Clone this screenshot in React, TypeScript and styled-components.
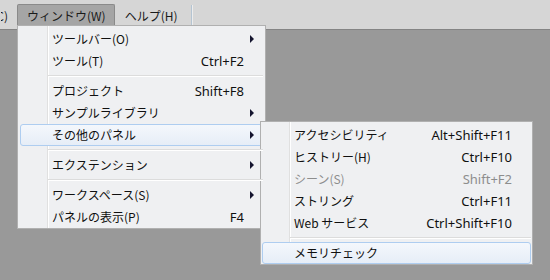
import React from "react";
import styled, { createGlobalStyle, css } from "styled-components";

const GlobalStyle = createGlobalStyle`
  html, body {
    margin: 0;
    padding: 0;
    background: #999999;
  }
  body {
    font-family: "Noto Sans CJK JP", "Noto Sans", sans-serif;
    font-size: 12px;
    color: #111;
  }
`;

type Item =
  | { kind: "sep" }
  | {
      kind?: "item";
      label: string;
      shortcut?: string;
      sub?: boolean;
      disabled?: boolean;
      active?: boolean;
    };

const windowMenu: Item[] = [
  { label: "ツールバー(O)", sub: true },
  { label: "ツール(T)", shortcut: "Ctrl+F2" },
  { kind: "sep" },
  { label: "プロジェクト", shortcut: "Shift+F8" },
  { label: "サンプルライブラリ", sub: true },
  { label: "その他のパネル", sub: true, active: true },
  { kind: "sep" },
  { label: "エクステンション", sub: true },
  { kind: "sep" },
  { label: "ワークスペース(S)", sub: true },
  { label: "パネルの表示(P)", shortcut: "F4" },
];

const panelMenu: Item[] = [
  { label: "アクセシビリティ", shortcut: "Alt+Shift+F11" },
  { label: "ヒストリー(H)", shortcut: "Ctrl+F10" },
  { label: "シーン(S)", shortcut: "Shift+F2", disabled: true },
  { label: "ストリング", shortcut: "Ctrl+F11" },
  { label: "Web サービス", shortcut: "Ctrl+Shift+F10" },
  { kind: "sep" },
  { label: "メモリチェック", active: true },
];

function Menu({ items, width, sub }: { items: Item[]; width: number; sub?: boolean }) {
  return (
    <Dropdown $width={width} $sub={sub}>
      {items.map((item, i) => {
        if (item.kind === "sep") return <Separator key={i} />;
        return (
          <Row key={i} $active={item.active} $disabled={item.disabled}>
            <Label>{item.label}</Label>
            <Shortcut>{item.shortcut}</Shortcut>
            <ArrowCell>{item.sub && <Arrow />}</ArrowCell>
            {item.active && item.sub && <Menu items={panelMenu} width={273} sub />}
          </Row>
        );
      })}
    </Dropdown>
  );
}

export default function App() {
  return (
    <Screen>
      <GlobalStyle />
      <MenuBar>
        <BarItem $clipped>コマンド(C)</BarItem>
        <BarItem $active>
          ウィンドウ(W)
          <Menu items={windowMenu} width={249} />
        </BarItem>
        <BarItem>ヘルプ(H)</BarItem>
        <BarDivider />
      </MenuBar>
      <Desktop />
    </Screen>
  );
}

const Screen = styled.div`
  width: 550px;
  height: 280px;
  display: flex;
  flex-direction: column;
  overflow: hidden;
`;

const MenuBar = styled.div`
  height: 25px;
  padding-top: 4px;
  display: flex;
  align-items: stretch;
  background: #d6d6d6;
  border-bottom: 1px solid #848484;
  position: relative;
  z-index: 2;
`;

const BarItem = styled.div<{ $active?: boolean; $clipped?: boolean }>`
  position: relative;
  display: flex;
  align-items: center;
  padding: 0 8px 3px 9px;
  border: 1px solid transparent;
  border-bottom: none;
  border-radius: 2px 2px 0 0;
  color: #1a1a1a;
  white-space: nowrap;
  ${(p) =>
    p.$active &&
    css`
      background: #a5a5a5;
      border-color: #8a8a8a;
    `}
  ${(p) =>
    p.$clipped &&
    css`
      width: 7px;
      padding: 0 8px 3px 0;
      justify-content: flex-end;
      overflow: hidden;
    `}
`;

const BarDivider = styled.div`
  width: 1px;
  margin: 1px 0 4px 4px;
  background: #b4c4d2;
  box-shadow: 1px 0 0 #ececec;
`;

const Desktop = styled.div`
  flex: 1;
  background: #999999;
`;

const Dropdown = styled.div<{ $width: number; $sub?: boolean }>`
  position: absolute;
  z-index: 3;
  width: ${(p) => p.$width}px;
  box-sizing: border-box;
  background: #eff0f2;
  border: 1px solid #b0b0b0;
  padding: 2px 2px 0 2px;
  ${(p) =>
    p.$sub
      ? css`
          left: calc(100% - 2px);
          top: -4px;
          padding: 2px 1px 0 1px;
        `
      : css`
          left: -1px;
          top: 20px;
        `}

  &::before {
    content: "";
    position: absolute;
    top: 0;
    bottom: 0;
    left: ${(p) => (p.$sub ? 28 : 29)}px;
    width: 1px;
    background: #e0e0e0;
    box-shadow: 1px 0 0 #ffffff;
  }
`;

const Row = styled.div<{ $active?: boolean; $disabled?: boolean }>`
  position: relative;
  z-index: 1;
  height: 22px;
  box-sizing: border-box;
  display: grid;
  grid-template-columns: 1fr auto 18px;
  align-items: center;
  padding-left: 31px;
  padding-bottom: 1px;
  border: 1px solid transparent;
  border-radius: 3px;
  color: ${(p) => (p.$disabled ? "#8d8d8d" : "#101010")};
  white-space: nowrap;
  ${(p) =>
    p.$active &&
    css`
      border-color: #aecdf0;
      background: linear-gradient(#f4f7fc, #e6edf7);
    `}
`;

const Label = styled.span`
  position: relative;
  z-index: 1;
`;

const Shortcut = styled.span`
  text-align: right;
  font-family: "Noto Sans", "Noto Sans CJK JP", sans-serif;
  font-size: 13px;
`;

const ArrowCell = styled.span`
  display: flex;
  align-items: center;
  padding-left: 6px;
`;

const Arrow = styled.span`
  width: 0;
  height: 0;
  border-top: 4px solid transparent;
  border-bottom: 4px solid transparent;
  border-left: 4px solid #14142e;
`;

const Separator = styled.div`
  height: 8px;
  box-sizing: border-box;
  padding-top: 3px;
  margin-left: 28px;
  position: relative;
  z-index: 1;

  &::after {
    content: "";
    display: block;
    height: 1px;
    background: #dcdcdc;
    box-shadow: 0 1px 0 #ffffff;
  }
`;
